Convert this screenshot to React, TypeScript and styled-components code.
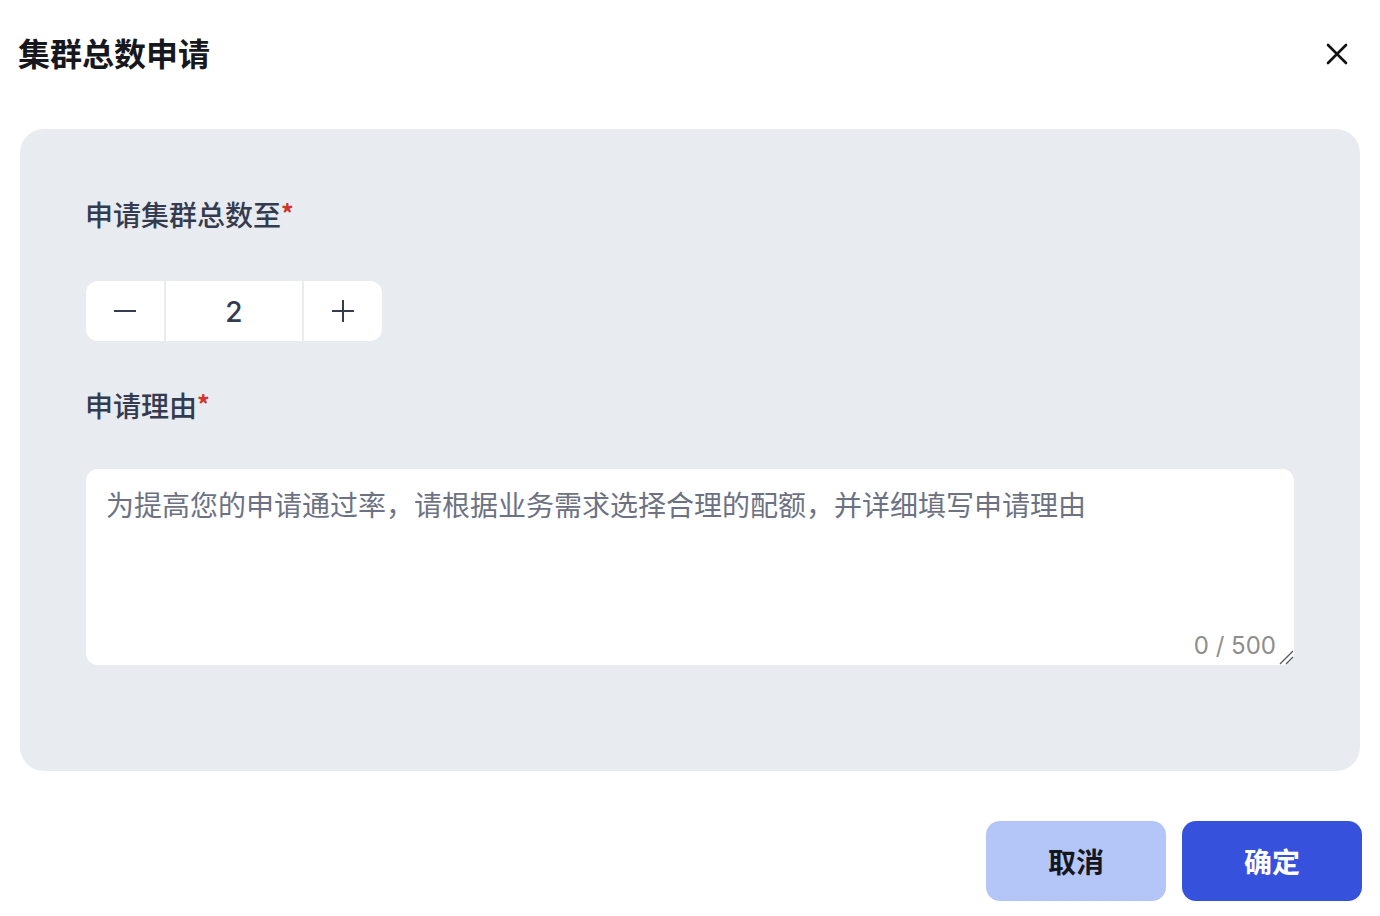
import React, { useState } from "react";
import styled, { createGlobalStyle } from "styled-components";

const GlobalStyle = createGlobalStyle`
  html, body {
    margin: 0;
    padding: 0;
    background: #ffffff;
  }
  body {
    font-family: Inter, "Noto Sans CJK SC", sans-serif;
    -webkit-font-smoothing: antialiased;
  }
  * {
    box-sizing: border-box;
  }
`;

const Dialog = styled.div`
  width: 1380px;
  height: 916px;
  display: flex;
  flex-direction: column;
  padding: 0 20px;
`;

const Header = styled.div`
  height: 108px;
  display: flex;
  align-items: center;
  justify-content: space-between;
`;

const Title = styled.h1`
  margin: 0 0 0 -2px;
  padding-bottom: 4px;
  font-family: "Noto Sans CJK SC", sans-serif;
  font-size: 32px;
  font-weight: 700;
  color: #16181d;
  line-height: 1;
`;

const CloseButton = styled.button`
  width: 40px;
  height: 40px;
  margin-right: 3px;
  padding: 0;
  border: none;
  background: transparent;
  display: flex;
  align-items: center;
  justify-content: center;
  cursor: pointer;
`;

const Panel = styled.div`
  margin-top: 21px;
  background: #e8ebef;
  border-radius: 24px;
  padding: 66px 66px 106px 65px;
  display: flex;
  flex-direction: column;
`;

const Label = styled.div<{ $gap: number }>`
  font-family: "Noto Sans CJK SC", sans-serif;
  font-size: 28px;
  font-weight: 500;
  color: #343b4f;
  line-height: 38px;
  margin-bottom: ${(p) => p.$gap}px;
`;

const Required = styled.span`
  color: #d0352b;
  font-size: 25px;
  font-weight: 700;
  vertical-align: top;
  position: relative;
  top: -2px;
`;

const Stepper = styled.div`
  display: flex;
  width: 296px;
  height: 60px;
  gap: 2px;
  margin-left: 1px;
  border-radius: 12px;
  overflow: hidden;
  margin-bottom: 45px;
`;

const StepButton = styled.button`
  width: 78px;
  height: 100%;
  border: none;
  padding: 0;
  background: #ffffff;
  display: flex;
  align-items: center;
  justify-content: center;
  cursor: pointer;
`;

const StepValue = styled.div`
  flex: 1;
  background: #ffffff;
  display: flex;
  align-items: center;
  justify-content: center;
  padding-top: 2px;
  font-family: Inter, sans-serif;
  font-size: 28px;
  font-weight: 500;
  color: #353c50;
`;

const TextareaWrap = styled.div`
  position: relative;
  margin-left: 1px;
`;

const Textarea = styled.textarea`
  display: block;
  width: 100%;
  height: 196px;
  border: none;
  outline: none;
  border-radius: 12px;
  background: #ffffff;
  padding: 15px 20px;
  resize: none;
  font-family: "Noto Sans CJK SC", sans-serif;
  font-size: 28px;
  line-height: 40px;
  text-spacing-trim: space-all;
  color: #343b4f;

  &::placeholder {
    color: #6c7283;
  }
`;

const Counter = styled.span`
  position: absolute;
  right: 18px;
  bottom: 5px;
  font-family: Inter, sans-serif;
  font-size: 24px;
  color: #8e8e8e;
  pointer-events: none;
`;

const Grip = styled.svg`
  position: absolute;
  right: 0;
  bottom: 0;
  pointer-events: none;
`;

const Footer = styled.div`
  margin-top: 50px;
  margin-right: -2px;
  display: flex;
  justify-content: flex-end;
  gap: 16px;
`;

const ActionButton = styled.button<{ $primary?: boolean }>`
  width: 180px;
  height: 80px;
  border: none;
  border-radius: 14px;
  background: ${(p) => (p.$primary ? "#3652dd" : "#b3c6f7")};
  color: ${(p) => (p.$primary ? "#ffffff" : "#15171c")};
  font-family: "Noto Sans CJK SC", sans-serif;
  font-size: 28px;
  font-weight: 700;
  cursor: pointer;
`;

const Line = () => (
  <svg width="24" height="24" viewBox="0 0 24 24">
    <path d="M1 12h22" stroke="#353c50" strokeWidth="2" />
  </svg>
);

const Plus = () => (
  <svg width="24" height="24" viewBox="0 0 24 24">
    <path d="M1 12h22M12 1v22" stroke="#353c50" strokeWidth="2" />
  </svg>
);

const CloseIcon = () => (
  <svg width="22" height="22" viewBox="0 0 22 22">
    <path d="M2 2l18 18M20 2L2 20" stroke="#111111" strokeWidth="2.6" strokeLinecap="round" />
  </svg>
);

const App = () => {
  const [count, setCount] = useState(2);
  const [reason, setReason] = useState("");

  return (
    <Dialog>
      <GlobalStyle />
      <Header>
        <Title>集群总数申请</Title>
        <CloseButton aria-label="关闭">
          <CloseIcon />
        </CloseButton>
      </Header>
      <Panel>
        <Label $gap={48}>
          申请集群总数至<Required>*</Required>
        </Label>
        <Stepper>
          <StepButton onClick={() => setCount((c) => Math.max(1, c - 1))}>
            <Line />
          </StepButton>
          <StepValue>{count}</StepValue>
          <StepButton onClick={() => setCount((c) => c + 1)}>
            <Plus />
          </StepButton>
        </Stepper>
        <Label $gap={45}>
          申请理由<Required>*</Required>
        </Label>
        <TextareaWrap>
          <Textarea
            maxLength={500}
            value={reason}
            onChange={(e) => setReason(e.target.value)}
            placeholder="为提高您的申请通过率，请根据业务需求选择合理的配额，并详细填写申请理由"
          />
          <Counter>{reason.length} / 500</Counter>
          <Grip width="16" height="16" viewBox="0 0 16 16">
            <path d="M2 15L15 2M8 15L15 8" stroke="#5a5a5a" strokeWidth="1.4" />
          </Grip>
        </TextareaWrap>
      </Panel>
      <Footer>
        <ActionButton>取消</ActionButton>
        <ActionButton $primary>确定</ActionButton>
      </Footer>
    </Dialog>
  );
};

export default App;
